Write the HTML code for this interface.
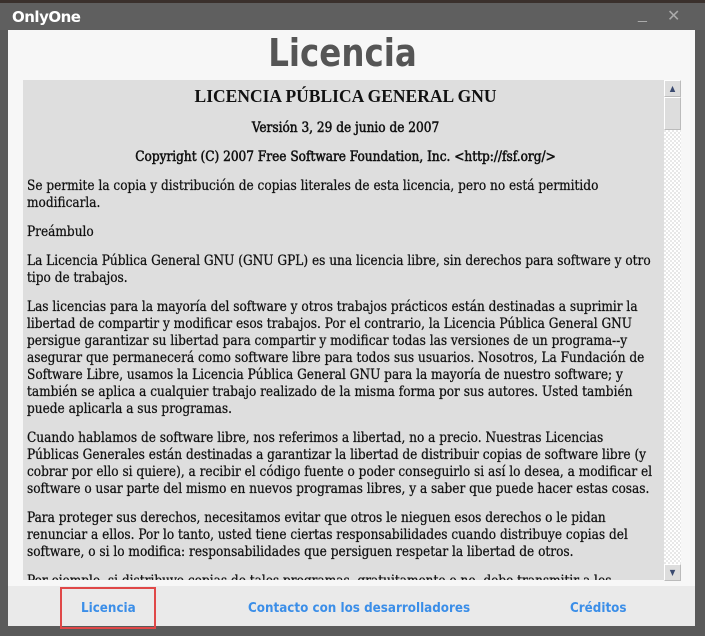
<!DOCTYPE html><html><head><style>
body{margin:0;width:705px;height:636px;background:#5a5a5a;position:relative;overflow:hidden;font-family:"DejaVu Serif Condensed","DejaVu Serif",serif}
.top{position:absolute;left:0;top:0;width:705px;height:3px;background:#3a302c}
.tb{position:absolute;left:0;top:3px;width:705px;height:27px;background:#5f5f5f}
.tt{position:absolute;left:12px;top:5px;color:#fff;font:bold 15px "DejaVu Sans","Liberation Sans",sans-serif;letter-spacing:-0.5px}
.ctl{position:absolute;top:3px;color:#aaa;font:16px "Liberation Sans",sans-serif}
.win{position:absolute;left:8px;top:30px;width:687px;height:596px;background:#f7f7f7}
h1{position:absolute;left:-9px;width:687px;top:1px;margin:0;text-align:center;font:bold 38px "DejaVu Sans Condensed",sans-serif;color:#555;transform:scaleX(0.95)}
.panel{position:absolute;left:15px;top:50px;width:641px;height:500px;background:#dedede;overflow:hidden}
.tx{padding:0 0 0 4px;font-size:13.5px;line-height:17px;color:#111;white-space:nowrap;-webkit-text-stroke:0.25px #111}
.tx p{margin:0 0 12px}
.c{text-align:center}
.sb{position:absolute;left:656px;top:50px;width:17px;height:500px;background:repeating-conic-gradient(#e8e8e8 0 25%,#fff 0 50%) 0 0/4px 4px}
.bt{position:absolute;left:0;width:15px;height:15px;background:#ddd;border:1px solid #bbb;border-top-color:#fff;border-left-color:#fff}
.foot{position:absolute;left:0;top:556px;width:687px;height:40px;background:#eaeaea;font:bold 13.3px "DejaVu Sans Condensed",sans-serif;color:#3b8ee8}
.foot span{position:absolute;top:15px}
</style></head><body>
<div class="top"></div>
<div class="tb"><div class="tt">OnlyOne</div><div class="ctl" style="left:638px">_</div><div class="ctl" style="left:667px">✕</div></div>
<div class="win">
<h1>Licencia</h1>
<div class="panel"><div class="tx">
<p class="c" style="font-family:'Liberation Serif',serif;font-size:17.5px;font-weight:bold;margin:8px 0 15px;-webkit-text-stroke:0">LICENCIA PÚBLICA GENERAL GNU</p>
<p class="c" style="-webkit-text-stroke:0.5px #111">Versión 3, 29 de junio de 2007</p>
<p class="c" style="-webkit-text-stroke:0.5px #111">Copyright (C) 2007 Free Software Foundation, Inc. &lt;http://fsf.org/&gt;</p>
<p>Se permite la copia y distribución de copias literales de esta licencia, pero no está permitido<br>modificarla.</p>
<p>Preámbulo</p>
<p>La Licencia Pública General GNU (GNU GPL) es una licencia libre, sin derechos para software y otro<br>tipo de trabajos.</p>
<p>Las licencias para la mayoría del software y otros trabajos prácticos están destinadas a suprimir la<br>libertad de compartir y modificar esos trabajos. Por el contrario, la Licencia Pública General GNU<br>persigue garantizar su libertad para compartir y modificar todas las versiones de un programa--y<br>asegurar que permanecerá como software libre para todos sus usuarios. Nosotros, La Fundación de<br>Software Libre, usamos la Licencia Pública General GNU para la mayoría de nuestro software; y<br>también se aplica a cualquier trabajo realizado de la misma forma por sus autores. Usted también<br>puede aplicarla a sus programas.</p>
<p>Cuando hablamos de software libre, nos referimos a libertad, no a precio. Nuestras Licencias<br>Públicas Generales están destinadas a garantizar la libertad de distribuir copias de software libre (y<br>cobrar por ello si quiere), a recibir el código fuente o poder conseguirlo si así lo desea, a modificar el<br>software o usar parte del mismo en nuevos programas libres, y a saber que puede hacer estas cosas.</p>
<p>Para proteger sus derechos, necesitamos evitar que otros le nieguen esos derechos o le pidan<br>renunciar a ellos. Por lo tanto, usted tiene ciertas responsabilidades cuando distribuye copias del<br>software, o si lo modifica: responsabilidades que persiguen respetar la libertad de otros.</p>
<p>Por ejemplo, si distribuye copias de tales programas, gratuitamente o no, debe transmitir a los<br>receptores las mismas libertades que usted ha recibido.</p>
</div></div>
<div class="sb">
<div class="bt" style="top:0;text-align:center;font-size:8px;line-height:15px;color:#3a4a70">▲</div>
<div class="bt" style="top:17px;height:31px"></div>
<div class="bt" style="top:484px;text-align:center;font-size:8px;line-height:15px;color:#3a4a70">▼</div>
</div>
<div class="foot">
<div style="position:absolute;left:52px;top:1px;width:96px;height:42px;border:2px solid #e04848;box-sizing:border-box"></div>
<span style="left:73px">Licencia</span>
<span style="left:240px">Contacto con los desarrolladores</span>
<span style="left:562px">Créditos</span>
</div>
</div>
</body></html>
